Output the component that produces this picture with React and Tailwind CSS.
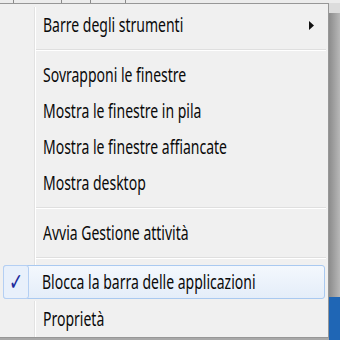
import { Fragment } from 'react';

const items = [
  { type: 'item', label: 'Barre degli strumenti', submenu: true },
  { type: 'sep' },
  { type: 'item', label: 'Sovrapponi le finestre' },
  { type: 'item', label: 'Mostra le finestre in pila' },
  { type: 'item', label: 'Mostra le finestre affiancate' },
  { type: 'item', label: 'Mostra desktop' },
  { type: 'sep' },
  { type: 'item', label: 'Avvia Gestione attività' },
  { type: 'sep' },
  { type: 'item', label: 'Blocca la barra delle applicazioni', checked: true, hover: true },
  { type: 'item', label: 'Proprietà' },
];

// screenshot is stretched taller than wide, so text is narrowed with scale-x
function Label({ children }) {
  return (
    <span className="whitespace-nowrap origin-left scale-x-[0.7] text-[20px] text-[#0a0a0a]">
      {children}
    </span>
  );
}

function Separator() {
  return (
    <div className="flex h-[14px]">
      <div className="w-[35px] shrink-0 border-r border-r-[#e2e2e2]" />
      <div className="w-px shrink-0 bg-white" />
      <div className="flex-1 flex flex-col justify-center pr-[2px]">
        <div className="h-px bg-[#dfdfdf]" />
        <div className="h-px bg-white" />
      </div>
    </div>
  );
}

function Item({ label, submenu, hover }) {
  if (hover) {
    return (
      <div className="h-[36px] px-[3px] pb-[2px]">
        <div className="flex h-full rounded-[3px] border border-[#a9c9f0] bg-gradient-to-b from-[#f4f8fd] to-[#e4edf9]">
          <div className="w-[26px] shrink-0 -ml-px -my-px rounded-[3px] border border-[#b4cff3] bg-[#e8f0fb] flex items-center justify-center">
            <span className="text-[#1d2b9c] text-[24px] leading-none scale-x-[0.7] font-['DejaVu_Sans']">✓</span>
          </div>
          <div className="w-[13px] shrink-0" />
          <div className="flex-1 min-w-0 flex items-center">
            <Label>{label}</Label>
          </div>
        </div>
      </div>
    );
  }
  return (
    <div className="flex h-[36px]">
      <div className="w-[35px] shrink-0 border-r border-r-[#e2e2e2]" />
      <div className="w-px shrink-0 bg-white" />
      <div className="flex-1 min-w-0 flex items-center pl-[7px] pr-[14px]">
        <div className="flex-1 min-w-0 flex items-center">
          <Label>{label}</Label>
        </div>
        {submenu && (
          <svg width="5" height="9" viewBox="0 0 5 9" className="shrink-0">
            <path d="M0 0 L5 4.5 L0 9 Z" fill="#111" />
          </svg>
        )}
      </div>
    </div>
  );
}

export default function App() {
  return (
    <div className="w-[340px] h-[340px] overflow-hidden flex flex-col bg-[#a8a8a8] font-['Noto_Sans',sans-serif]">
      {/* taskbar buttons behind the menu */}
      <div className="h-[3px] flex bg-[#ececec]">
        <div className="w-[14px] border-r border-[#8a8a8a]" />
        <div className="w-[48px] border-r border-[#8a8a8a]" />
        <div className="w-[29px] border-r border-[#8a8a8a]" />
        <div className="w-[35px] border-r border-[#8a8a8a]" />
        <div className="flex-1" />
      </div>
      <div className="flex flex-1">
        <div className="w-[329px] shrink-0 h-[335px] bg-[#f0f0f0] border-t border-r border-b border-[#979797] pt-[3px] flex flex-col overflow-hidden">
          {items.map((it, i) => (
            <Fragment key={i}>
              {it.type === 'sep' ? <Separator /> : <Item {...it} />}
            </Fragment>
          ))}
        </div>
        {/* shadow and desktop at the right */}
        <div className="flex-1 flex flex-col">
          <div className="h-[10px] bg-[#dcdcdc]" />
          <div className="flex-1 bg-gradient-to-r from-[#8c8c8c] to-[#b8b8b8]" />
          <div className="h-[43px] bg-[#1f66b5]" />
        </div>
      </div>
    </div>
  );
}
